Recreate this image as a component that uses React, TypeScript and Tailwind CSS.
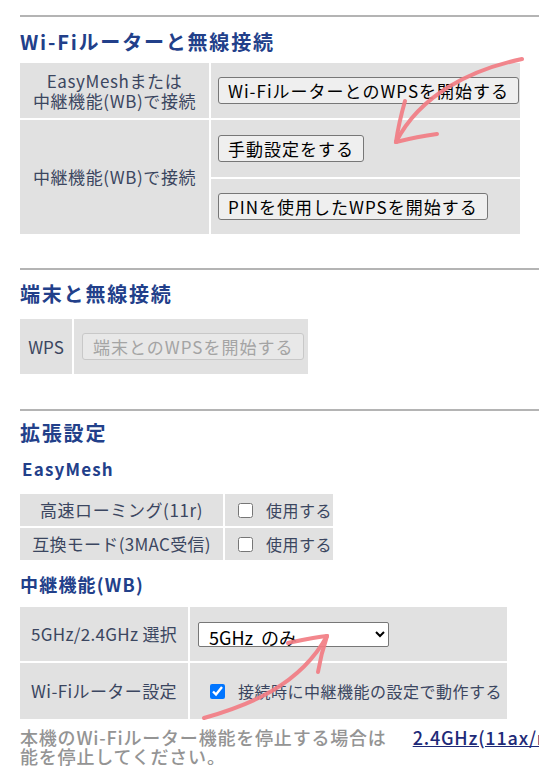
import React from "react";

const font = { fontFamily: '"Noto Sans CJK JP", "Noto Sans", sans-serif' };

function Rule() {
  return <div className="h-[2px] bg-[#b4b4b4]" />;
}

function Btn({ label, disabled }: { label: string; disabled?: boolean }) {
  return (
    <button
      disabled={disabled}
      className={
        disabled
          ? "h-[27px] px-[10px] rounded-[3px] border border-[#c8c8c8] bg-[#e8e8e8] text-[17px] leading-none tracking-[1px] text-[#a4a4a4] whitespace-nowrap"
          : "h-[27px] px-[9px] rounded-[3px] border border-[#777] bg-[#efefef] text-[17px] leading-none tracking-[1px] text-black whitespace-nowrap"
      }
    >
      {label}
    </button>
  );
}

function Check({ label, checked }: { label: string; checked?: boolean }) {
  return (
    <label className="flex items-center gap-[13px] text-[16px] tracking-[0.5px] text-[#3b4660] whitespace-nowrap">
      <input
        type="checkbox"
        defaultChecked={checked}
        className="w-[15px] h-[15px] m-0 accent-[#0075ff]"
      />
      {label}
    </label>
  );
}

function Arrows() {
  return (
    <svg
      className="absolute inset-0 pointer-events-none"
      width="539"
      height="768"
      viewBox="0 0 539 768"
    >
      <g
        fill="none"
        stroke="#f27d84"
        strokeWidth="4"
        strokeLinecap="round"
        strokeLinejoin="round"
        opacity="0.92"
      >
        <path d="M522 59 C 470 70, 420 95, 396 142" />
        <path d="M405 101 C 401 115, 398 128, 396 142" />
        <path d="M437 134 C 422 136, 408 139, 396 142" />
        <path d="M204 718 C 250 705, 300 685, 327 636" />
        <path d="M288 643 C 302 640, 315 637, 327 636" />
        <path d="M318 672 C 320 660, 323 648, 327 636" />
      </g>
    </svg>
  );
}

export default function App() {
  return (
    <div
      className="relative w-[539px] h-[768px] overflow-hidden bg-white"
      style={font}
    >
      <div className="pl-[20px] pt-[15px]">
        {/* Wi-Fiルーターと無線接続 */}
        <Rule />
        <h2 className="mt-[12px] text-[20px] leading-[26px] font-bold tracking-[1.8px] text-[#22408a]">
          Wi-Fiルーターと無線接続
        </h2>
        <div className="mt-[8px] grid grid-cols-[189px_309px] grid-rows-[55px_57px_55px] gap-[2px] w-[500px]">
          <div className="bg-[#e1e1e1] flex flex-col items-center justify-center text-[17px] leading-[20px] tracking-[0.6px] text-[#3b4660]">
            <span>EasyMeshまたは</span>
            <span>中継機能(WB)で接続</span>
          </div>
          <div className="bg-[#e1e1e1] flex items-center pl-[7px]">
            <Btn label="Wi-FiルーターとのWPSを開始する" />
          </div>
          <div className="row-span-2 bg-[#e1e1e1] flex items-center justify-center text-[17px] tracking-[0.6px] text-[#3b4660]">
            中継機能(WB)で接続
          </div>
          <div className="bg-[#e1e1e1] flex items-center pl-[7px]">
            <Btn label="手動設定をする" />
          </div>
          <div className="bg-[#e1e1e1] flex items-center pl-[7px]">
            <Btn label="PINを使用したWPSを開始する" />
          </div>
        </div>

        {/* 端末と無線接続 */}
        <div className="mt-[34px]">
          <Rule />
        </div>
        <h2 className="mt-[11px] text-[20px] leading-[26px] font-bold tracking-[1.8px] text-[#22408a]">
          端末と無線接続
        </h2>
        <div className="mt-[12px] grid grid-cols-[52px_234px] h-[55px] gap-[2px] w-[288px]">
          <div className="bg-[#e1e1e1] flex items-center justify-center text-[17px] text-[#3b4660]">
            WPS
          </div>
          <div className="bg-[#e1e1e1] flex items-center pl-[8px]">
            <Btn label="端末とのWPSを開始する" disabled />
          </div>
        </div>

        {/* 拡張設定 */}
        <div className="mt-[35px]">
          <Rule />
        </div>
        <h2 className="mt-[9px] text-[20px] leading-[26px] font-bold tracking-[1.8px] text-[#22408a]">
          拡張設定
        </h2>
        <h3 className="mt-[12px] pl-[2px] text-[17px] leading-[22px] font-bold tracking-[1.2px] text-[#22408a]">
          EasyMesh
        </h3>
        <div className="mt-[14px] grid grid-cols-[203px_108px] grid-rows-[32px_32px] gap-[2px] w-[313px]">
          <div className="bg-[#e1e1e1] flex items-center justify-center text-[17px] tracking-[0.6px] text-[#3b4660]">
            高速ローミング(11r)
          </div>
          <div className="bg-[#e1e1e1] flex items-center pl-[13px]">
            <Check label="使用する" />
          </div>
          <div className="bg-[#e1e1e1] flex items-center justify-center text-[17px] tracking-[0.3px] text-[#3b4660]">
            互換モード(3MAC受信)
          </div>
          <div className="bg-[#e1e1e1] flex items-center pl-[13px]">
            <Check label="使用する" />
          </div>
        </div>

        <h3 className="mt-[12px] text-[18px] leading-[24px] font-bold tracking-[1.2px] text-[#22408a]">
          中継機能(WB)
        </h3>
        <div className="mt-[11px] grid grid-cols-[168px_317px] grid-rows-[54px_56px] gap-[2px] w-[487px]">
          <div className="bg-[#e1e1e1] flex items-center justify-center text-[17px] tracking-[0.3px] text-[#3b4660]">
            5GHz/2.4GHz 選択
          </div>
          <div className="bg-[#e1e1e1] flex items-center pl-[8px]">
            <select
              defaultValue="5"
              className="w-[191px] h-[25px] border border-[#777] rounded-[2px] bg-white text-[18px] leading-none text-black pl-[6px]"
            >
              <option value="5">5GHz&nbsp; のみ</option>
              <option value="24">2.4GHz&nbsp; のみ</option>
            </select>
          </div>
          <div className="bg-[#e1e1e1] flex items-center justify-center text-[17px] tracking-[0.4px] text-[#3b4660]">
            Wi-Fiルーター設定
          </div>
          <div className="bg-[#e1e1e1] flex items-center pl-[20px]">
            <Check label="接続時に中継機能の設定で動作する" checked />
          </div>
        </div>

        <div className="mt-[9px] text-[18px] leading-[19px] font-medium tracking-[0.8px] text-[#949494] whitespace-nowrap">
          <p>
            本機のWi-Fiルーター機能を停止する場合は
            <a href="#" className="ml-[26px] text-[#1e2a78] underline">
              2.4GHz(11ax/n/g/b)
            </a>
            と5GHz(11ax/ac/n/a)の無線機
          </p>
          <p>能を停止してください。</p>
        </div>
      </div>
      <Arrows />
    </div>
  );
}
